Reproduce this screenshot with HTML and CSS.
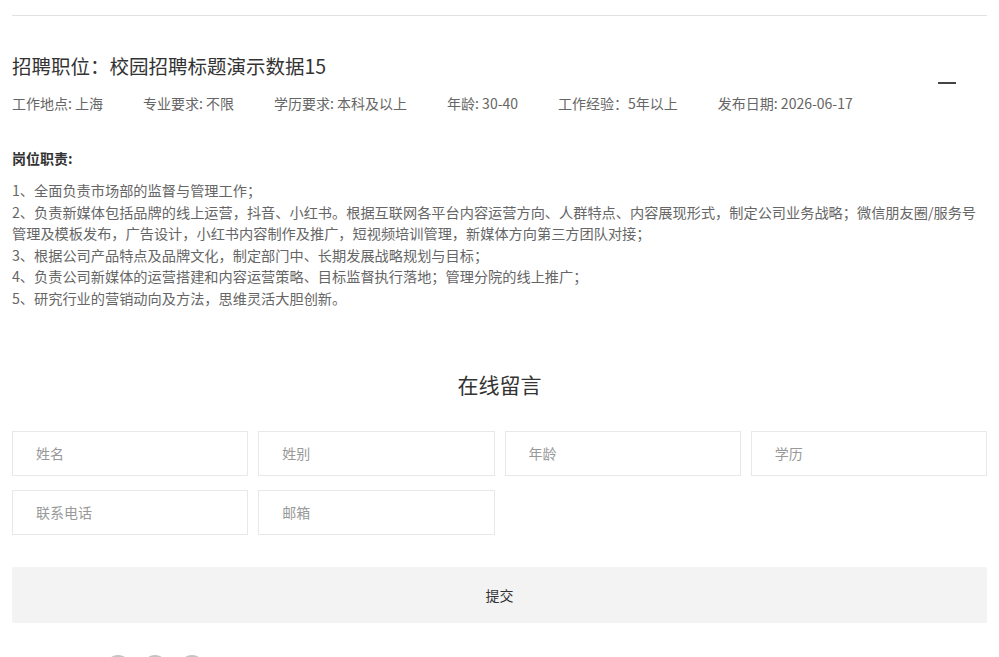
FILE: index.html
```html
<!DOCTYPE html>
<html lang="zh-CN">
<head>
    <meta charset="UTF-8">
    <title>招聘详情</title>
    <link rel="stylesheet" href="styles.css">
</head>
<body>

<div class="page">
    <div class="topLine"></div>

    <!-- job header -->
    <div class="jobHead">
        <div class="jobInfo">
            <h2 class="jobTitle">招聘职位：校园招聘标题演示数据15</h2>
            <div class="jobMeta">
                <span>工作地点: 上海</span>
                <span>专业要求: 不限</span>
                <span>学历要求: 本科及以上</span>
                <span>年龄: 30-40</span>
                <span>工作经验：5年以上</span>
                <span>发布日期: 2026-06-17</span>
            </div>
        </div>
        <span class="toggle"></span>
    </div>

    <!-- job description -->
    <div class="jobDesc">
        <h4>岗位职责:</h4>
        <p>1、全面负责市场部的监督与管理工作；<br>
        2、负责新媒体包括品牌的线上运营，抖音、小红书。根据互联网各平台内容运营方向、人群特点、内容展现形式，制定公司业务战略；微信朋友圈/服务号管理及模板发布，广告设计，小红书内容制作及推广，短视频培训管理，新媒体方向第三方团队对接；<br>
        3、根据公司产品特点及品牌文化，制定部门中、长期发展战略规划与目标；<br>
        4、负责公司新媒体的运营搭建和内容运营策略、目标监督执行落地；管理分院的线上推广；<br>
        5、研究行业的营销动向及方法，思维灵活大胆创新。</p>
    </div>

    <!-- message form -->
    <div class="message">
        <h3>在线留言</h3>
        <form class="msgForm">
            <input type="text" placeholder="姓名">
            <input type="text" placeholder="姓别">
            <input type="text" placeholder="年龄">
            <input type="text" placeholder="学历">
            <input type="text" placeholder="联系电话">
            <input type="text" placeholder="邮箱">
            <button type="button" class="submit">提交</button>
        </form>
    </div>

    <!-- share icons -->
    <div class="share">
        <span class="shareIcon"></span>
        <span class="shareIcon"></span>
        <span class="shareIcon"></span>
    </div>
</div>

</body>
</html>
```

FILE: styles.css
```css
body {
    margin: 0;
    background: #fff;
    font-family: "Noto Sans CJK SC", "Noto Sans", sans-serif;
    color: #333;
}

.page {
    padding: 0 12px;
}

.topLine {
    height: 15px;
    border-bottom: 1px solid #e2e2e2;
}

.jobHead {
    display: flex;
    align-items: center;
    justify-content: space-between;
    margin-top: 35px;
}

.jobTitle {
    margin: 0;
    font-size: 19.5px;
    font-weight: normal;
    line-height: 30px;
    color: #333;
}

.jobMeta {
    display: flex;
    gap: 40px;
    margin-top: 11px;
    font-size: 14px;
    line-height: 22px;
    color: #666;
}

.toggle {
    width: 18px;
    height: 2px;
    background: #444;
    margin-right: 31px;
    margin-top: 0;
}

.jobDesc {
    margin-top: 33px;
}

.jobDesc h4 {
    margin: 0;
    font-size: 14px;
    line-height: 22px;
    font-weight: bold;
    color: #333;
}

.jobDesc p {
    margin: 11px 0 0;
    font-size: 14.2px;
    line-height: 21.6px;
    color: #666;
}

.message {
    margin-top: 58px;
}

.message h3 {
    margin: 0;
    text-align: center;
    font-size: 21px;
    font-weight: normal;
    line-height: 32px;
    color: #333;
}

.msgForm {
    display: grid;
    grid-template-columns: repeat(4, 1fr);
    column-gap: 10px;
    row-gap: 14px;
    margin-top: 31px;
}

.msgForm input {
    height: 45px;
    box-sizing: border-box;
    border: 1px solid #e8e8e8;
    padding: 0 23px;
    font-family: inherit;
    font-size: 14px;
    color: #333;
    outline: none;
}

.msgForm input::placeholder {
    color: #999;
}

.submit {
    grid-column: 1 / -1;
    margin-top: 18px;
    height: 56px;
    border: 0;
    border-radius: 2px;
    background: #f3f3f3;
    font-family: inherit;
    font-size: 14px;
    color: #333;
    cursor: pointer;
}

.share {
    display: flex;
    gap: 11px;
    margin-top: 32px;
    padding-left: 93px;
}

.shareIcon {
    width: 26px;
    height: 26px;
    border-radius: 50%;
    background: #c4c4c4;
}
```
